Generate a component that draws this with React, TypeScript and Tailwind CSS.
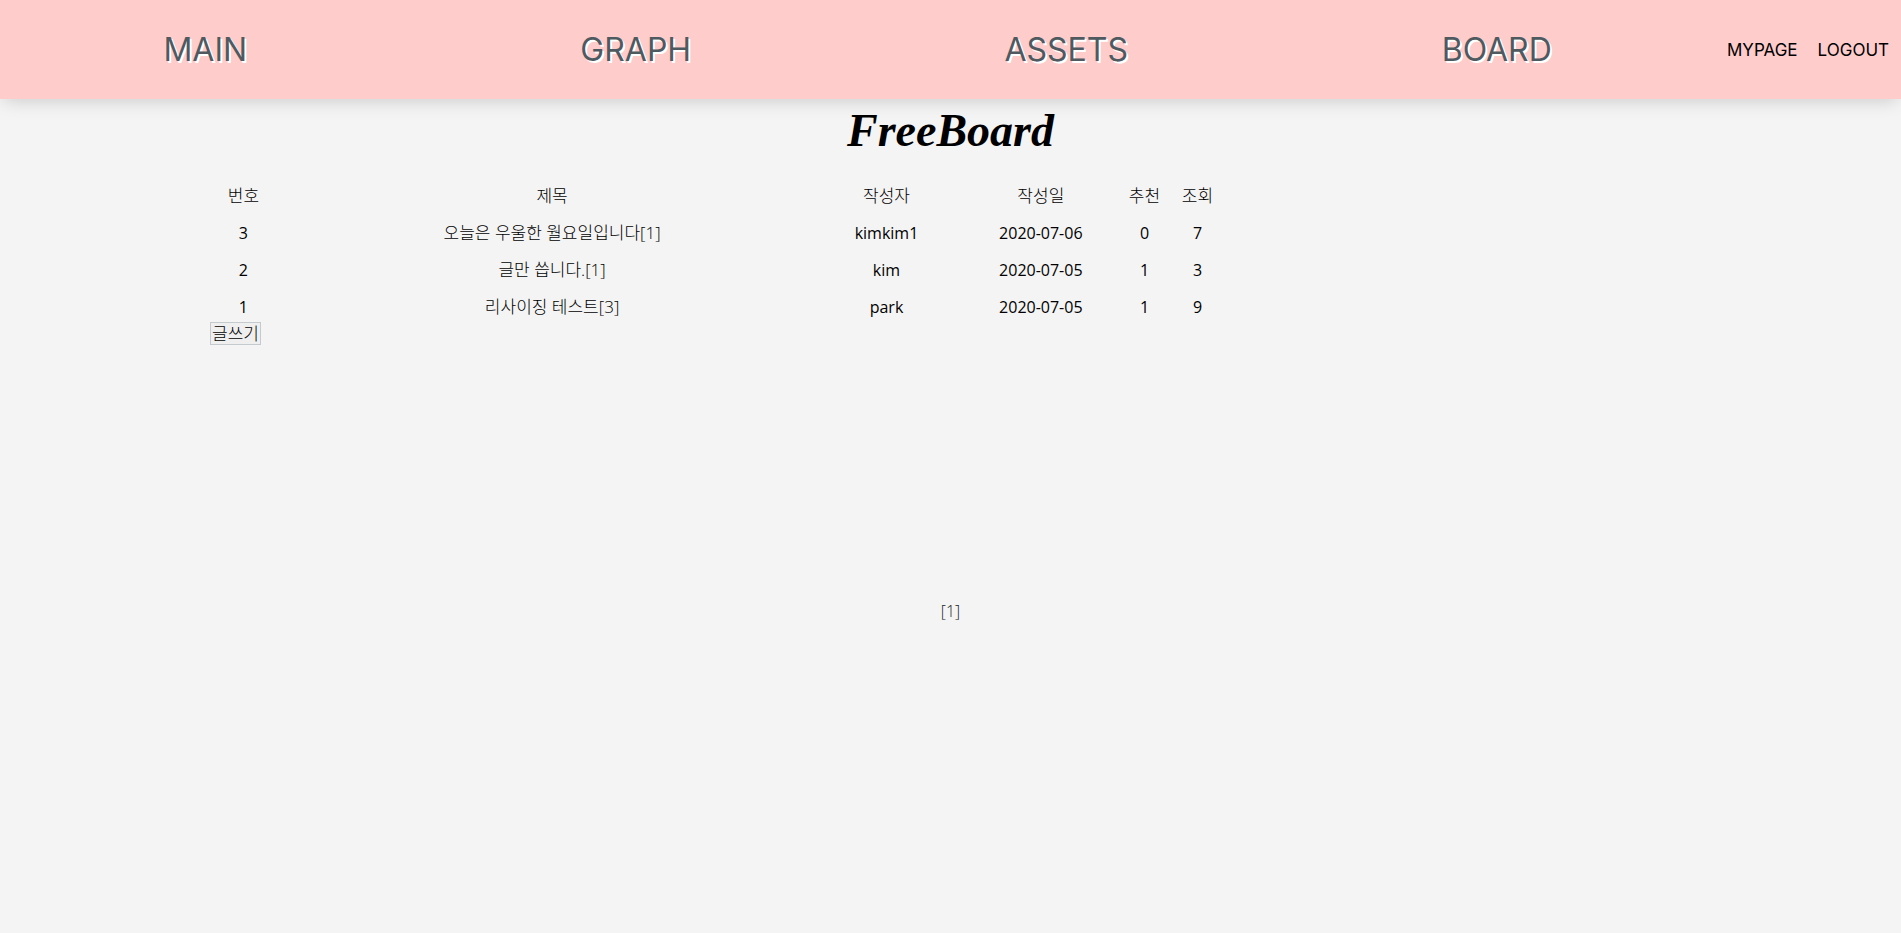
type Post = {
  id: number;
  title: string;
  comments: number;
  author: string;
  date: string;
  likes: number;
  views: number;
};

const menu = ['MAIN', 'GRAPH', 'ASSETS', 'BOARD'];

const columns = [
  { label: '번호', width: 'w-[10%]' },
  { label: '제목', width: 'w-[50%]' },
  { label: '작성자', width: 'w-[15%]' },
  { label: '작성일', width: 'w-[15%]' },
  { label: '추천', width: 'w-[53px]' },
  { label: '조회', width: 'w-[53px]' },
];

const posts: Post[] = [
  { id: 3, title: '오늘은 우울한 월요일입니다', comments: 1, author: 'kimkim1', date: '2020-07-06', likes: 0, views: 7 },
  { id: 2, title: '글만 씁니다.', comments: 1, author: 'kim', date: '2020-07-05', likes: 1, views: 3 },
  { id: 1, title: '리사이징 테스트', comments: 3, author: 'park', date: '2020-07-05', likes: 1, views: 9 },
];

function Header() {
  return (
    <header className="flex h-[99px] items-center gap-5 bg-[#ffcccc] font-['Inter',sans-serif] shadow-[0_4px_18px_-4px_rgba(0,0,0,0.2)]">
      <nav className="grid flex-1 grid-cols-4 gap-5">
        {menu.map((item) => (
          <a
            key={item}
            href="#"
            className="text-center text-[32px] leading-10 text-[#4f5a60] [text-shadow:2px_2px_0_#fff]"
          >
            {item}
          </a>
        ))}
      </nav>
      <div className="flex w-[179px] justify-end gap-5 pr-3 text-[17px] leading-6 text-black">
        <a href="#">MYPAGE</a>
        <a href="#">LOGOUT</a>
      </div>
    </header>
  );
}

function PostTable() {
  return (
    <table className="w-full max-w-[1032px] table-fixed text-center">
      <thead>
        <tr className="h-[37px] text-[17px]">
          {columns.map((column) => (
            <th key={column.label} scope="col" className={`${column.width} font-light whitespace-nowrap`}>
              {column.label}
            </th>
          ))}
        </tr>
      </thead>
      <tbody>
        {posts.map((post) => (
          <tr key={post.id} className="h-[37px]">
            <td>{post.id}</td>
            <td className="text-[17px] font-light">
              <a href="#">
                {post.title}[{post.comments}]
              </a>
            </td>
            <td>{post.author}</td>
            <td>{post.date}</td>
            <td>{post.likes}</td>
            <td>{post.views}</td>
          </tr>
        ))}
      </tbody>
    </table>
  );
}

export default function App() {
  return (
    <div className="min-h-screen bg-[#f4f4f4] font-['Open_Sans','Noto_Sans_CJK_KR',sans-serif] text-base text-black">
      <Header />
      <main>
        <h1 className="pt-1 text-center font-['Liberation_Serif',serif] text-[46px] leading-[56px] font-bold italic">
          FreeBoard
        </h1>
        <section className="min-h-[432px] px-48 pt-[18px]">
          <PostTable />
          <button
            type="button"
            className="-mt-[3px] ml-[18px] block h-[23px] border border-[#c5cace] bg-[#efefef] px-px text-[17px] leading-5 font-light"
          >
            글쓰기
          </button>
        </section>
        <nav aria-label="페이지" className="pt-2 text-center font-light text-[#222]">
          <a href="#">[1]</a>
        </nav>
      </main>
    </div>
  );
}
